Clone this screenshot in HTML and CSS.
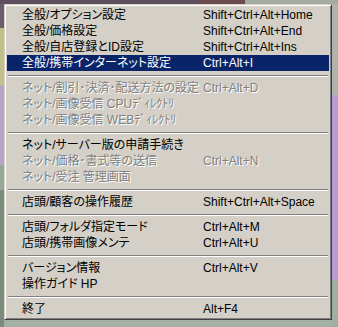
FILE: index.html
```html
<!DOCTYPE html>
<html lang="ja">
<head>
<meta charset="utf-8">
<link rel="stylesheet" href="styles.css">
</head>
<body>
<div class="menu">
  <div class="item"><span class="label">全般/オプション設定</span><span class="key">Shift+Ctrl+Alt+Home</span></div>
  <div class="item"><span class="label">全般/価格設定</span><span class="key">Shift+Ctrl+Alt+End</span></div>
  <div class="item"><span class="label">全般/自店登録とID設定</span><span class="key">Shift+Ctrl+Alt+Ins</span></div>
  <div class="item active"><span class="label">全般/携帯インターネット設定</span><span class="key">Ctrl+Alt+I</span></div>
  <div class="sep"></div>
  <div class="item disabled"><span class="label">ネット/割引･決済･配送方法の設定</span><span class="key">Ctrl+Alt+D</span></div>
  <div class="item disabled"><span class="label">ネット/画像受信 CPUﾃﾞｨﾚｸﾄﾘ</span><span class="key"></span></div>
  <div class="item disabled"><span class="label">ネット/画像受信 WEBﾃﾞｨﾚｸﾄﾘ</span><span class="key"></span></div>
  <div class="sep"></div>
  <div class="item"><span class="label">ネット/サーバー版の申請手続き</span><span class="key"></span></div>
  <div class="item disabled"><span class="label">ネット/価格･書式等の送信</span><span class="key">Ctrl+Alt+N</span></div>
  <div class="item disabled"><span class="label">ネット/受注 管理画面</span><span class="key"></span></div>
  <div class="sep"></div>
  <div class="item"><span class="label">店頭/顧客の操作履歴</span><span class="key">Shift+Ctrl+Alt+Space</span></div>
  <div class="sep"></div>
  <div class="item"><span class="label">店頭/フォルダ指定モード</span><span class="key">Ctrl+Alt+M</span></div>
  <div class="item"><span class="label">店頭/携帯画像メンテ</span><span class="key">Ctrl+Alt+U</span></div>
  <div class="sep"></div>
  <div class="item"><span class="label">バージョン情報</span><span class="key">Ctrl+Alt+V</span></div>
  <div class="item"><span class="label">操作ガイド HP</span><span class="key"></span></div>
  <div class="sep"></div>
  <div class="item"><span class="label">終了</span><span class="key">Alt+F4</span></div>
</div>
</body>
</html>
```

FILE: styles.css
```css
html, body {
  margin: 0;
  padding: 0;
  height: 100%;
}
body {
  overflow: hidden;
  background-color: #a4b0a4;
  background-image:
    linear-gradient(to right, #5e4e5e 0, #5e4e5e 200px, #6c4a52 200px, #6c4a52 245px, #a4aca0 245px),
    linear-gradient(to bottom, #6c5c6c 0, #6c5c6c 28px, #c0c088 28px, #c0c088 85px, #b8a4c8 85px, #b8a4c8 165px, #98a898 165px, #98a898 190px, #7c8c7c 190px),
    linear-gradient(to bottom, #b0b4ac 0, #b0b4ac 95px, #b89cd4 95px, #b89cd4 280px, #a0b0a0 280px);
  background-size: 100% 4px, 4px 100%, 6px 100%;
  background-position: 0 0, 0 0, 100% 0;
  background-repeat: no-repeat;
  font-family: "Liberation Sans", "Noto Sans CJK JP", sans-serif;
  font-size: 12px;
  font-feature-settings: "palt";
}
.menu {
  box-sizing: border-box;
  width: 328px;
  margin: 4px 0 0 4px;
  background: #d4d0c8;
  border: 1px solid;
  border-color: #d4d0c8 #404040 #404040 #d4d0c8;
  box-shadow: inset 1px 1px 0 #ffffff, inset -1px -1px 0 #808080;
  padding: 2px;
}
.item {
  display: grid;
  grid-template-columns: 196px 1fr;
  height: 16px;
  line-height: 16px;
  color: #000;
  white-space: nowrap;
}
.label {
  padding-left: 15px;
}
.active {
  background: #0a246a;
  color: #fff;
}
.disabled {
  color: #808080;
  text-shadow: 1px 1px 0 #fff;
}
.sep {
  padding: 4px 1px 3px;
}
.sep::before {
  content: "";
  display: block;
  border-top: 1px solid #808080;
  border-bottom: 1px solid #fff;
}
```
